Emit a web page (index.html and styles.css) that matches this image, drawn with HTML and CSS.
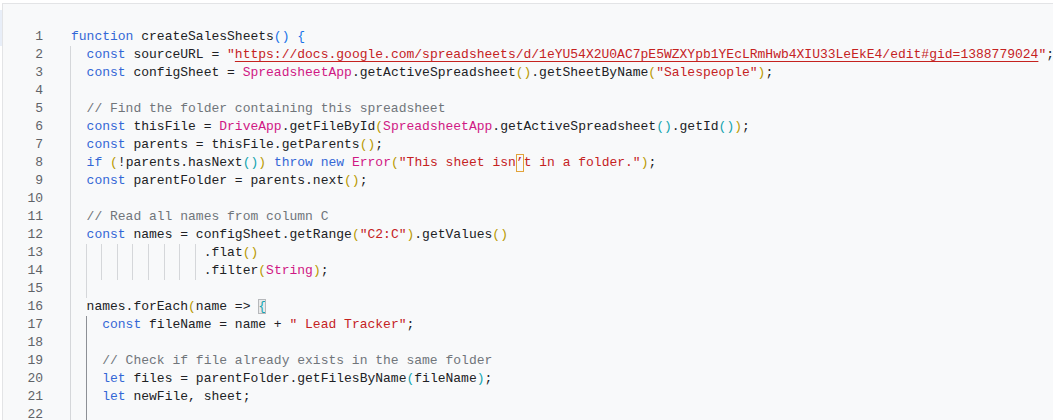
FILE: index.html
```html
<!DOCTYPE html>
<html lang="en">
<head>
<meta charset="utf-8">
<title>Code.gs</title>
<link rel="stylesheet" href="styles.css">
</head>
<body>
<div class="page">
  <div class="side"><div class="side-tab"></div></div>
  <div class="editor">
    <div class="row"><span class="num">1</span><span class="code"><span class="kw">function</span> createSalesSheets<span class="b1">()</span> <span class="b1">{</span></span></div>
    <div class="row"><span class="num">2</span><span class="code"><span class="g">  </span><span class="kw">const</span> sourceURL = <span class="str">"<span class="link">https://docs.google.com/spreadsheets/d/1eYU54X2U0AC7pE5WZXYpb1YEcLRmHwb4XIU33LeEkE4/edit#gid=1388779024</span>"</span>;</span></div>
    <div class="row"><span class="num">3</span><span class="code"><span class="g">  </span><span class="kw">const</span> configSheet = <span class="cls">SpreadsheetApp</span>.getActiveSpreadsheet<span class="b2">()</span>.getSheetByName<span class="b2">(</span><span class="str">"Salespeople"</span><span class="b2">)</span>;</span></div>
    <div class="row"><span class="num">4</span><span class="code"><span class="g">  </span></span></div>
    <div class="row"><span class="num">5</span><span class="code"><span class="g">  </span><span class="cm">// Find the folder containing this spreadsheet</span></span></div>
    <div class="row"><span class="num">6</span><span class="code"><span class="g">  </span><span class="kw">const</span> thisFile = <span class="cls">DriveApp</span>.getFileById<span class="b2">(</span><span class="cls">SpreadsheetApp</span>.getActiveSpreadsheet<span class="b3">()</span>.getId<span class="b3">()</span><span class="b2">)</span>;</span></div>
    <div class="row"><span class="num">7</span><span class="code"><span class="g">  </span><span class="kw">const</span> parents = thisFile.getParents<span class="b2">()</span>;</span></div>
    <div class="row"><span class="num">8</span><span class="code"><span class="g">  </span><span class="kw">if</span> <span class="b2">(</span>!parents.hasNext<span class="b3">()</span><span class="b2">)</span> <span class="kw">throw</span> <span class="kw">new</span> <span class="cls">Error</span><span class="b2">(</span><span class="str">"This sheet isn<span class="uni">’</span>t in a folder."</span><span class="b2">)</span>;</span></div>
    <div class="row"><span class="num">9</span><span class="code"><span class="g">  </span><span class="kw">const</span> parentFolder = parents.next<span class="b2">()</span>;</span></div>
    <div class="row"><span class="num">10</span><span class="code"><span class="g">  </span></span></div>
    <div class="row"><span class="num">11</span><span class="code"><span class="g">  </span><span class="cm">// Read all names from column C</span></span></div>
    <div class="row"><span class="num">12</span><span class="code"><span class="g">  </span><span class="kw">const</span> names = configSheet.getRange<span class="b2">(</span><span class="str">"C2:C"</span><span class="b2">)</span>.getValues<span class="b2">()</span></span></div>
    <div class="row"><span class="num">13</span><span class="code"><span class="g">  </span><span class="g">  </span><span class="g">  </span><span class="g">  </span><span class="g">  </span><span class="g">  </span><span class="g">  </span><span class="g">  </span><span class="g"> </span>.flat<span class="b2">()</span></span></div>
    <div class="row"><span class="num">14</span><span class="code"><span class="g">  </span><span class="g">  </span><span class="g">  </span><span class="g">  </span><span class="g">  </span><span class="g">  </span><span class="g">  </span><span class="g">  </span><span class="g"> </span>.filter<span class="b2">(</span><span class="cls">String</span><span class="b2">)</span>;</span></div>
    <div class="row"><span class="num">15</span><span class="code"><span class="g">  </span><span class="g">  </span></span></div>
    <div class="row"><span class="num">16</span><span class="code"><span class="g">  </span>names.forEach<span class="b2">(</span>name =&gt; <span class="b3 match">{</span></span></div>
    <div class="row"><span class="num">17</span><span class="code"><span class="g">  </span><span class="g act">  </span><span class="kw">const</span> fileName = name + <span class="str">" Lead Tracker"</span>;</span></div>
    <div class="row"><span class="num">18</span><span class="code"><span class="g">  </span><span class="g act">  </span></span></div>
    <div class="row"><span class="num">19</span><span class="code"><span class="g">  </span><span class="g act">  </span><span class="cm">// Check if file already exists in the same folder</span></span></div>
    <div class="row"><span class="num">20</span><span class="code"><span class="g">  </span><span class="g act">  </span><span class="kw">let</span> files = parentFolder.getFilesByName<span class="b3">(</span>fileName<span class="b3">)</span>;</span></div>
    <div class="row"><span class="num">21</span><span class="code"><span class="g">  </span><span class="g act">  </span><span class="kw">let</span> newFile, sheet;</span></div>
    <div class="row"><span class="num">22</span><span class="code"><span class="g">  </span><span class="g act">  </span></span></div>
  </div>
</div>
</body>
</html>
```
FILE: styles.css
```css
html, body {
  margin: 0;
  padding: 0;
  background: #ffffff;
  overflow: hidden;
}

.page {
  display: flex;
  width: 1053px;
  height: 420px;
  padding-top: 3px;
  box-sizing: border-box;
}

.side {
  width: 2px;
  flex: none;
  padding-top: 7px;
}

.side-tab {
  height: 36px;
  background: #e8eef8;
}

.editor {
  flex: 1;
  min-width: 0;
  background: #f8f9fa;
  border-top: 1px solid #e3e4e6;
  border-left: 1px solid #e3e4e6;
  padding-top: 24px;
  font-family: "Liberation Mono", "DejaVu Sans Mono", monospace;
  font-size: 13px;
  line-height: 18px;
  color: #202124;
  overflow: hidden;
}

.row {
  display: flex;
  height: 18px;
  white-space: pre;
}

.num {
  flex: none;
  width: 40px;
  text-align: right;
  color: #5f6368;
}

.code {
  flex: none;
  margin-left: 27px;
  padding-left: 1px;
}

.g {
  display: inline-block;
  height: 18px;
  vertical-align: top;
  margin-left: -1px;
  padding-left: 1px;
  background: linear-gradient(90deg, #d5d7da 0 1px, transparent 1px) no-repeat;
}

.g.act {
  background: linear-gradient(90deg, #8d9096 0 1px, transparent 1px) no-repeat;
}

.kw { color: #3367d6; }
.str { color: #c5221f; }
.cls { color: #d01884; }
.cm { color: #70757a; }

.link {
  text-decoration: underline;
  text-decoration-color: #c5221f;
  text-decoration-thickness: 1px;
  text-underline-offset: 3px;
}

.b1 { color: #1a73e8; }
.b2 { color: #b89a00; }
.b3 { color: #12a4af; }

.match {
  background: #e9eaeb;
  outline: 1px solid #b6b8bb;
  outline-offset: -1px;
}

.uni {
  display: inline-block;
  height: 18px;
  vertical-align: top;
  outline: 1px solid #e2a33a;
  outline-offset: -1px;
}
```
